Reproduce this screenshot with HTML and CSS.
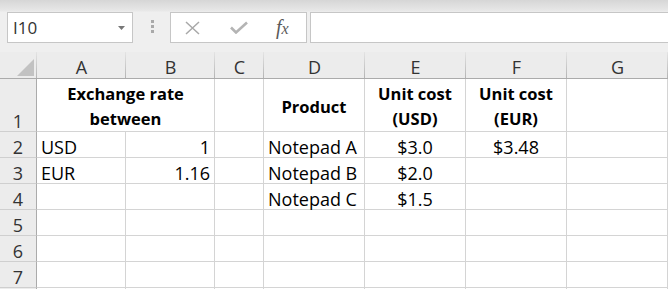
FILE: index.html
```html
<!DOCTYPE html>
<html lang="en">
<head>
    <meta charset="UTF-8">
    <meta name="viewport" content="width=device-width, initial-scale=1.0">
    <title>Exchange rate sheet</title>
    <link rel="stylesheet" href="styles.css">
</head>
<body>
    <!-- Name box and formula bar -->
    <div class="toolbar">
        <div class="name-box">
            <span>I10</span>
            <svg class="drop" width="7" height="4" viewBox="0 0 7 4"><polygon points="0,0 7,0 3.5,4" fill="#777"/></svg>
        </div>
        <div class="grip"><i></i><i></i><i></i></div>
        <div class="fx-box">
            <svg class="icon-x" width="15" height="14" viewBox="0 0 15 14">
                <path d="M1 1 L14 13 M14 1 L1 13" stroke="#a8a8a8" stroke-width="1.5" fill="none"/>
            </svg>
            <svg class="icon-check" width="18" height="13" viewBox="0 0 18 13">
                <polyline points="1,6.5 6,11.5 17,1.5" stroke="#b4b4b4" stroke-width="2.6" fill="none"/>
            </svg>
            <span class="fx">f<span class="fx-x">x</span></span>
        </div>
        <div class="formula-input"></div>
    </div>

    <!-- Sheet grid -->
    <div class="sheet">
        <div class="corner">
            <svg width="17" height="17" viewBox="0 0 17 17"><polygon points="17,0 17,17 0,17" fill="#c2c2c2"/></svg>
        </div>
        <div class="col-head">A</div>
        <div class="col-head">B</div>
        <div class="col-head">C</div>
        <div class="col-head">D</div>
        <div class="col-head">E</div>
        <div class="col-head">F</div>
        <div class="col-head">G</div>

        <div class="row-head">1</div>
        <div class="cell title merged">Exchange rate<br>between</div>
        <div class="cell"></div>
        <div class="cell title">Product</div>
        <div class="cell title">Unit cost<br>(USD)</div>
        <div class="cell title">Unit cost<br>(EUR)</div>
        <div class="cell"></div>

        <div class="row-head">2</div>
        <div class="cell">USD</div>
        <div class="cell right">1</div>
        <div class="cell"></div>
        <div class="cell">Notepad A</div>
        <div class="cell center">$3.0</div>
        <div class="cell center">$3.48</div>
        <div class="cell"></div>

        <div class="row-head">3</div>
        <div class="cell">EUR</div>
        <div class="cell right">1.16</div>
        <div class="cell"></div>
        <div class="cell">Notepad B</div>
        <div class="cell center">$2.0</div>
        <div class="cell"></div>
        <div class="cell"></div>

        <div class="row-head">4</div>
        <div class="cell"></div>
        <div class="cell"></div>
        <div class="cell"></div>
        <div class="cell">Notepad C</div>
        <div class="cell center">$1.5</div>
        <div class="cell"></div>
        <div class="cell"></div>

        <div class="row-head">5</div>
        <div class="cell"></div><div class="cell"></div><div class="cell"></div><div class="cell"></div>
        <div class="cell"></div><div class="cell"></div><div class="cell"></div>

        <div class="row-head">6</div>
        <div class="cell"></div><div class="cell"></div><div class="cell"></div><div class="cell"></div>
        <div class="cell"></div><div class="cell"></div><div class="cell"></div>

        <div class="row-head">7</div>
        <div class="cell"></div><div class="cell"></div><div class="cell"></div><div class="cell"></div>
        <div class="cell"></div><div class="cell"></div><div class="cell"></div>

        <!-- row 8 only shows its top edge -->
        <div class="row-head"></div>
        <div class="cell"></div><div class="cell"></div><div class="cell"></div><div class="cell"></div>
        <div class="cell"></div><div class="cell"></div><div class="cell"></div>
    </div>
</body>
</html>
```

FILE: styles.css
```css
*{
    box-sizing: border-box;
}
body{
    margin: 0;
    overflow: hidden;
    font-family: "Open Sans", sans-serif;
    font-size: 18px;
    color: #000;
    background-color: #fff;
}

/* formula bar */
.toolbar{
    display: flex;
    align-items: flex-start;
    height: 52px;
    padding-top: 12px;
    background: linear-gradient(to bottom, #d6d6d6 0, #e8e8e8 11px, #efefef 12px, #efefef 100%);
}
.name-box{
    display: flex;
    align-items: center;
    justify-content: space-between;
    width: 126px;
    height: 31px;
    margin-left: 7px;
    padding: 0 7px 0 5px;
    background-color: #fff;
    border: 1px solid #c6c6c6;
    color: #333;
    font-size: 17px;
}
.grip{
    display: flex;
    flex-direction: column;
    gap: 2px;
    margin: 8px 0 0 18px;
}
.grip i{
    display: block;
    width: 3px;
    height: 3px;
    background-color: #a9a9a9;
}
.fx-box{
    display: flex;
    align-items: center;
    width: 137px;
    height: 31px;
    margin-left: 16px;
    padding-left: 14px;
    background-color: #fff;
    border: 1px solid #c6c6c6;
}
.icon-check{
    margin-left: 30px;
}
.fx{
    margin-left: 28px;
    font-family: "Liberation Serif", "DejaVu Serif", serif;
    font-style: italic;
    font-size: 20px;
    color: #5a5a5a;
    line-height: 20px;
}
.fx-x{
    font-size: 16px;
}
.formula-input{
    flex: 1;
    height: 31px;
    margin: 0 -2px 0 3px;
    background-color: #fff;
    border: 1px solid #c6c6c6;
}

/* sheet */
.sheet{
    display: grid;
    grid-template-columns: 37px 89px 89px 49px 101px 101px 101px 1fr;
    grid-template-rows: 27px 53px repeat(7, 26px);
}
.corner, .col-head{
    display: flex;
    background-color: #ececec;
    background-image: linear-gradient(to bottom, #e4e4e4, #b4b4b4);
    background-size: 1px 100%;
    background-position: right top;
    background-repeat: no-repeat;
    border-bottom: 1px solid #ababab;
}
.corner{
    align-items: flex-end;
    justify-content: flex-end;
    padding: 0 3px 2px 0;
}
.col-head{
    align-items: flex-end;
    justify-content: center;
    line-height: 20px;
    padding-bottom: 1px;
    color: #333;
}
.row-head{
    display: flex;
    align-items: flex-end;
    justify-content: center;
    line-height: 20px;
    background-color: #ececec;
    border-right: 1px solid #ababab;
    border-bottom: 1px solid #cfcfcf;
    color: #333;
}
.cell{
    display: flex;
    align-items: flex-end;
    padding: 0 4px;
    line-height: 20px;
    white-space: nowrap;
    border-right: 1px solid #d4d4d4;
    border-bottom: 1px solid #d4d4d4;
}
.right{
    justify-content: flex-end;
}
.center{
    justify-content: center;
}
.title{
    align-items: center;
    justify-content: center;
    text-align: center;
    padding-top: 2px;
    font-weight: 700;
    font-size: 16.5px;
    line-height: 25px;
}
.merged{
    grid-column: span 2;
}
```
